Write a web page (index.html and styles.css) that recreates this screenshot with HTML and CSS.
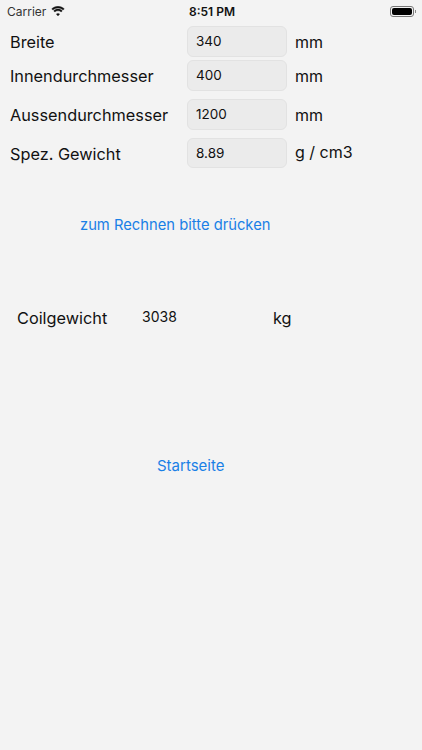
FILE: index.html
```html
<!DOCTYPE html>
<html lang="de">
<head>
    <meta charset="UTF-8">
    <meta name="viewport" content="width=device-width, initial-scale=1.0">
    <title>Coilgewicht</title>
    <link rel="stylesheet" href="styles.css">
</head>
<body>
    <div class="status">
        <div class="status-left">
            <span>Carrier</span>
            <svg class="wifi" width="14" height="10" viewBox="0 0 15 10.7">
                <path d="M7.5 2.2c2.100 0 4 .8 5.500 2.100l1.200-1.300C12.400 1.300 10 .3 7.500.3S2.600 1.300.8 3l1.200 1.300C3.500 3 5.400 2.200 7.500 2.200z"/>
                <path d="M7.500 5.100c1.300 0 2.500.5 3.400 1.300l1.200-1.300C10.900 4 9.300 3.300 7.500 3.300S4.100 4 2.900 5.100l1.200 1.300c.9-.8 2.100-1.300 3.400-1.300z"/>
                <path d="M7.500 7.900c-.7 0-1.300.2-1.800.7l1.800 2 1.800-2c-.5-.5-1.100-.7-1.800-.7z"/>
            </svg>
        </div>
        <div class="status-time">8:51 PM</div>
        <div class="battery"><div class="battery-level"></div></div>
        <div class="battery-cap"></div>
    </div>

    <div class="form">
        <div class="row row-1">
            <div class="label">Breite</div>
            <div class="field">340</div>
            <div class="unit">mm</div>
        </div>
        <div class="row row-2">
            <div class="label">Innendurchmesser</div>
            <div class="field">400</div>
            <div class="unit">mm</div>
        </div>
        <div class="row row-3">
            <div class="label">Aussendurchmesser</div>
            <div class="field">1200</div>
            <div class="unit unit-3">mm</div>
        </div>
        <div class="row row-4">
            <div class="label">Spez. Gewicht</div>
            <div class="field">8.89</div>
            <div class="unit unit-4">g / cm3</div>
        </div>
    </div>

    <a class="link calc" href="#">zum Rechnen bitte drücken</a>

    <div class="result">
        <div class="result-label">Coilgewicht</div>
        <div class="result-value">3038</div>
        <div class="result-unit">kg</div>
    </div>

    <a class="link start" href="#">Startseite</a>
</body>
</html>
```

FILE: styles.css
```css
html, body {
    margin: 0;
    padding: 0;
}
body {
    width: 422px;
    height: 750px;
    overflow: hidden;
    background-color: #f3f3f3;
    color: #111;
    font-family: "Inter", "Liberation Sans", sans-serif;
}

.status {
    display: flex;
    align-items: center;
    height: 20px;
    padding: 1px 6px 0 7px;
    font-size: 12px;
}
.status-left {
    display: flex;
    align-items: center;
    gap: 5px;
    width: 182px;
    color: #333;
}
.status-time {
    font-weight: 600;
    flex: 1;
}
.wifi {
    fill: #111;
    stroke: #111;
    stroke-width: 0.4;
}
.battery {
    box-sizing: border-box;
    width: 24px;
    height: 11px;
    padding: 1px;
    border: 1px solid #777;
    border-radius: 3px;
}
.battery-level {
    height: 100%;
    background-color: #000;
    border-radius: 2px;
}
.battery-cap {
    width: 1px;
    height: 3px;
    margin-left: 1px;
    background-color: #888;
}

.form {
    padding: 5px 0 0 10px;
}
.row {
    display: flex;
    align-items: center;
    height: 30.600px;
}
.row-2 {
    margin-top: 3.400px;
}
.row-3 {
    margin-top: 8.400px;
}
.row-4 {
    margin-top: 8px;
}
.label {
    width: 177px;
    margin-top: 1.500px;
    font-size: 16.300px;
}
.field {
    box-sizing: border-box;
    width: 100px;
    height: 100%;
    padding-left: 8px;
    line-height: 28px;
    font-size: 13.500px;
    background-color: #ebebeb;
    border: 1px solid #e2e2e2;
    border-radius: 6px;
}
.unit {
    margin: 2px 0 0 8px;
    font-size: 16px;
}
.unit-3 {
    margin-bottom: 0;
}
.unit-4 {
    margin-bottom: 3px;
}

.link {
    display: block;
    color: #1a80e6;
    text-decoration: none;
}
.calc {
    margin: 47.400px 0 0 80px;
    font-size: 14.750px;
}
.result {
    display: flex;
    align-items: center;
    margin: 74px 0 0 17px;
}
.result-label {
    width: 125px;
    font-size: 16.300px;
}
.result-value {
    width: 131px;
    font-size: 14px;
    margin-top: -3px;
}
.result-unit {
    font-size: 16.300px;
}
.start {
    margin: 128px 0 0 157px;
    font-size: 15px;
}
```
